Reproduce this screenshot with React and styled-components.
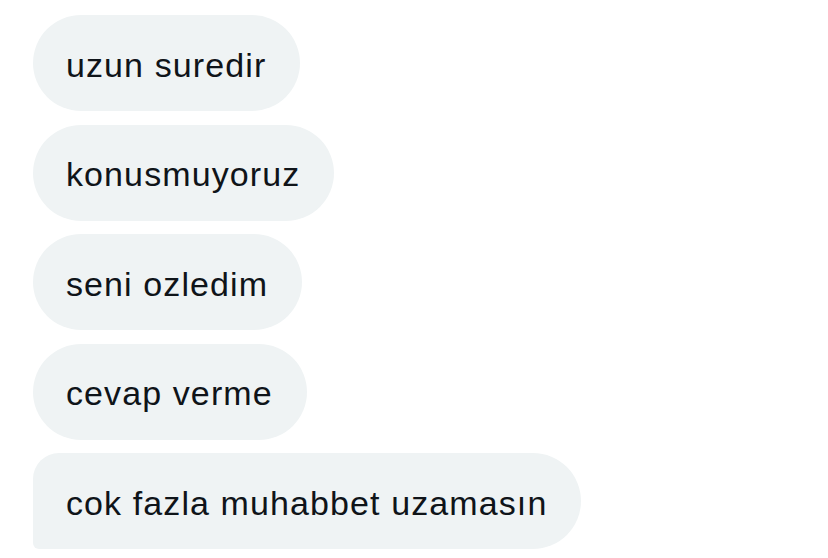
import styled, { createGlobalStyle } from 'styled-components';

const GlobalStyle = createGlobalStyle`
  html, body {
    margin: 0;
    padding: 0;
    background: #ffffff;
  }
  body {
    font-family: "Liberation Sans", Arial, sans-serif;
  }
`;

const messages = [
  'uzun suredir',
  'konusmuyoruz',
  'seni ozledim',
  'cevap verme',
  'cok fazla muhabbet uzamasın',
];

const Thread = styled.div`
  width: 828px;
  height: 558px;
  overflow: hidden;
  display: flex;
  flex-direction: column;
  align-items: flex-start;
  gap: 13.5px;
  padding: 15px 0 0 33px;
  box-sizing: border-box;
`;

const Bubble = styled.div`
  flex-shrink: 0;
  height: 96px;
  display: flex;
  align-items: center;
  padding: 4px 34px 0 33px;
  box-sizing: border-box;
  background: #eff3f4;
  color: #0f1419;
  font-size: 34px;
  letter-spacing: 1.1px;
  border-radius: ${(p) => (p.$last ? '26px 48px 48px 6px' : '48px')};
`;

const App = () => {
  return (
    <>
      <GlobalStyle />
      <Thread>
        {messages.map((text, i) => (
          <Bubble key={i} $last={i === messages.length - 1}>
            {text}
          </Bubble>
        ))}
      </Thread>
    </>
  );
};

export default App;
